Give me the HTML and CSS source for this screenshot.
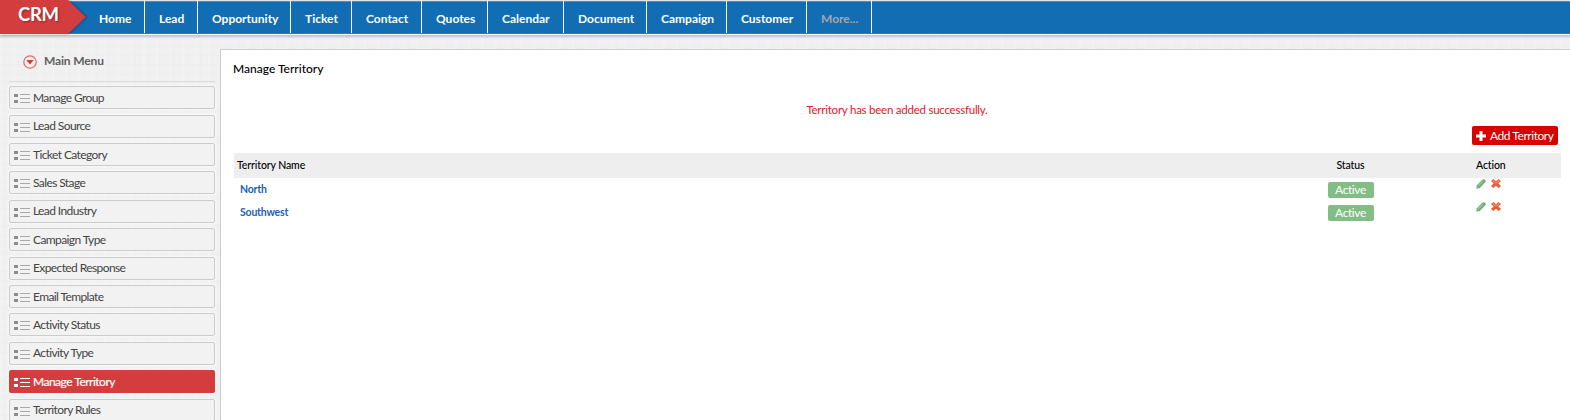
FILE: index.html
```html
<!DOCTYPE html>
<html lang="en">
<head>
<meta charset="utf-8">
<title>CRM - Manage Territory</title>
<link rel="stylesheet" href="styles.css">
</head>
<body>
<svg class="defs" width="0" height="0">
  <symbol id="list" viewBox="0 0 16 11">
    <path class="dots" d="M0 1h4v3H0zM0 7h4v3H0z"/>
    <path class="lines" d="M6 1.5h10M6 5.5h10M6 9.5h10"/>
  </symbol>
  <symbol id="pencil" viewBox="0 0 10 10">
    <path fill="#6fae74" d="M.3 9.8l.6-3.6L6 1l3 2.600-5.200 5.500z"/>
    <path fill="#8fc793" d="M1.6 6.5L6.6 1.5l1 1L2.6 7.6z"/>
    <path fill="#6aab6f" d="M6.800 .6q.8-.8 1.600 0l1 .8q.8.9 0 1.800l-.6.6L6 1.200z"/>
  </symbol>
  <symbol id="cross" viewBox="0 0 10 9">
    <path fill="#ea5a36" d="M2.3 0L5 2.3 7.7 0 10 2 7.3 4.500 10 7 7.700 9 5 6.700 2.300 9 0 7l2.700-2.500L0 2z"/>
    <path fill="#fb8a6c" d="M2.300 1L5 3.400 7.700 1l1 1-2.500 2.300H3.800L1.300 2z"/>
  </symbol>
</svg>
<header class="topbar">
  <div class="brand"><svg class="flag" viewBox="0 0 86 34"><path d="M0 0h68l18 17-18 17H0z"/></svg><span>CRM</span></div>
  <nav class="nav">
    <a class="home">Home</a><a class="lead">Lead</a><a class="opportunity">Opportunity</a><a class="ticket">Ticket</a><a class="contact">Contact</a><a class="quotes">Quotes</a><a class="calendar">Calendar</a><a class="document">Document</a><a class="campaign">Campaign</a><a class="customer">Customer</a><a class="more">More...</a>
  </nav>
</header>
<div class="page">
  <aside class="sidebar">
    <h2 class="menu-title"><svg width="14" height="14" viewBox="0 0 14 14"><circle cx="7" cy="7" r="6.200" fill="#f8eeee" stroke="#dc6a6a" stroke-width="1.200"/><path d="M3.300 5h7.400L7 9.400z" fill="#d23c3c"/></svg>Main Menu</h2>
    <ul class="menu">
      <li><svg><use href="#list"/></svg>Manage Group</li>
      <li><svg><use href="#list"/></svg>Lead Source</li>
      <li><svg><use href="#list"/></svg>Ticket Category</li>
      <li><svg><use href="#list"/></svg>Sales Stage</li>
      <li><svg><use href="#list"/></svg>Lead Industry</li>
      <li><svg><use href="#list"/></svg>Campaign Type</li>
      <li><svg><use href="#list"/></svg>Expected Response</li>
      <li><svg><use href="#list"/></svg>Email Template</li>
      <li><svg><use href="#list"/></svg>Activity Status</li>
      <li><svg><use href="#list"/></svg>Activity Type</li>
      <li class="current"><svg><use href="#list"/></svg>Manage Territory</li>
      <li><svg><use href="#list"/></svg>Territory Rules</li>
    </ul>
  </aside>
  <main class="content">
    <h1>Manage Territory</h1>
    <p class="message">Territory has been added successfully.</p>
    <div class="toolbar"><a class="add"><svg width="10" height="10" viewBox="0 0 10 10"><path d="M3.500 0h3v3.500H10v3H6.500V10h-3V6.500H0v-3h3.500z" fill="#fff"/></svg>Add Territory</a></div>
    <div class="table">
      <div class="row head"><span>Territory Name</span><span class="status">Status</span><span class="action">Action</span></div>
      <div class="row"><a class="name">North</a><span class="status"><b class="badge">Active</b></span><span class="action icons"><svg width="10" height="10"><use href="#pencil"/></svg><svg width="10" height="9"><use href="#cross"/></svg></span></div>
      <div class="row"><a class="name">Southwest</a><span class="status"><b class="badge">Active</b></span><span class="action icons"><svg width="10" height="10"><use href="#pencil"/></svg><svg width="10" height="9"><use href="#cross"/></svg></span></div>
    </div>
  </main>
</div>
</body>
</html>
```
FILE: styles.css
```css
* { box-sizing: border-box; }
body {
  margin: 0;
  height: 420px;
  overflow: hidden;
  font: 12px/16px Lato, sans-serif;
  color: #444;
  background-color: #f0f0f0;
  background-image:
    repeating-linear-gradient(90deg, rgba(255,255,255,.16) 0 2px, transparent 2px 5px, rgba(225,225,225,.14) 5px 6px, transparent 6px 13px),
    repeating-linear-gradient(0deg, rgba(255,255,255,.16) 0 1px, transparent 1px 4px, rgba(225,225,225,.14) 4px 5px, transparent 5px 9px);
}
.defs { display: block; }
.topbar {
  display: flex;
  height: 35px;
  border-top: 1px solid #e4e4e4;
  border-bottom: 1px solid #fff;
  background: linear-gradient(#4b8fc2 0 1px, #126db3 1px 32px, #3a75b8 32px);
  box-shadow: 0 1px 2px 1px #c4c4c8;
}
.brand { display: grid; width: 86px; height: 34px; margin-top: -1px; }
.brand > * { grid-area: 1 / 1; }
.flag { width: 86px; height: 34px; fill: #d43d3e; filter: drop-shadow(1px 0 1px rgba(0,0,0,.35)); z-index: 1; }
.brand span {
  z-index: 2;
  padding: 4px 0 0 18px;
  font-size: 18.500px;
  line-height: 21px;
  font-weight: 700;
  letter-spacing: -.3px;
  color: #fff;
  text-shadow: 1px 1px 2px rgba(0,0,0,.35);
}
.nav { display: flex; height: 32px; }
.nav a {
  padding-left: 14px;
  border-right: 1px solid #fff;
  font-weight: 700;
  line-height: 35px;
  color: #fff;
  white-space: nowrap;
}
.nav .home { width: 59px; padding-left: 13px; }
.nav .lead { width: 53px; }
.nav .opportunity { width: 93px; }
.nav .ticket { width: 61px; }
.nav .contact { width: 70px; }
.nav .quotes { width: 66px; }
.nav .calendar { width: 76px; }
.nav .document { width: 83px; }
.nav .campaign { width: 80px; }
.nav .customer { width: 80px; }
.nav .more { width: 65px; color: #a6a6a6; }
.page { display: flex; height: 385px; }
.sidebar { width: 220px; padding: 18px 5px 0 9px; }
.menu-title {
  display: flex;
  align-items: center;
  gap: 7px;
  height: 29px;
  margin: 0 0 4px;
  padding: 0 0 13px 14px;
  border-bottom: 1px solid #dcdcdc;
  font-size: 12px;
  font-weight: 700;
  letter-spacing: -.15px;
  color: #606060;
}
.menu-title svg { margin-top: 2px; }
.menu { display: flex; flex-direction: column; gap: 5.400px; margin: 0; padding: .3px 0 0; list-style: none; }
.menu li {
  display: flex;
  flex: none;
  align-items: center;
  gap: 3px;
  height: 23px;
  padding-left: 4px;
  border: 1px solid #ccc;
  border-radius: 2px;
  background: #f2f2f2;
  box-shadow: 0 0 3px 1px rgba(255,255,255,.6);
  letter-spacing: -.6px;
}
.menu svg { width: 16px; height: 11px; margin-top: 2px; }
.dots { fill: #8c8c8c; }
.lines { fill: none; stroke: #a8a8a8; }
.menu .current { background: #d43d3e; border-color: #d43d3e; color: #fff; letter-spacing: -.5px; -webkit-text-stroke: .2px #fff; }
.current svg { filter: brightness(2.2); }
.content {
  flex: 1;
  margin-top: 14px;
  padding: 11px 9px 0 12px;
  border: solid #ccc;
  border-width: 1px 0 0 1px;
  background: #fff;
}
h1 { margin: 0; font-size: 12px; line-height: 16px; font-weight: 500; color: #000; }
.message { margin: 25px 0 0; text-align: center; font-size: 11.500px; letter-spacing: -.24px; color: #e0182d; }
.toolbar { display: flex; justify-content: flex-end; margin: 8px 3px 8px; }
.add {
  display: flex;
  align-items: center;
  gap: 4px;
  width: 86px;
  height: 19px;
  padding-left: 4px;
  border-radius: 2px;
  background: #d90000;
  letter-spacing: -.45px;
  color: #fff;
  white-space: nowrap;
}
.table { margin-left: 1px; font-size: 10.500px; }
.row { display: grid; grid-template-columns: 1076px 81px 1fr; height: 23px; }
.head { height: 25px; padding-left: 3px; background: #eee; grid-template-columns: 1073px 81px 1fr; align-items: center; font-weight: 500; letter-spacing: -.1px; color: #000; }
.head span { margin-top: -1px; }
.name { padding: 3px 0 0 6px; font-weight: 700; letter-spacing: -.2px; color: #2062b3; }
.status { text-align: center; }
.badge { display: block; width: 46px; height: 16px; margin: 4px auto 0; border-radius: 2px; background: #82bd85; color: #fff; font-size: 12px; font-weight: 400; line-height: 16px; letter-spacing: -.4px; }
.action { padding-left: 85px; }
.icons { display: flex; gap: 5px; padding-top: 1px; }
```
